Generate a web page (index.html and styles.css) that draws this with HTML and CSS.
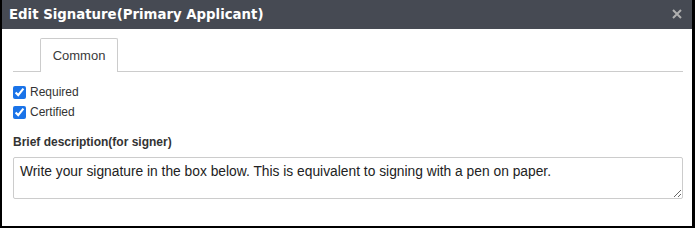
FILE: index.html
```html
<!DOCTYPE html>
<html lang="en">
<head>
    <meta charset="UTF-8">
    <title>Edit Signature</title>
    <link rel="stylesheet" href="styles.css">
</head>
<body>
    <div class="dialog">
        <div class="titlebar">
            <span class="title">Edit Signature(Primary Applicant)</span>
            <svg class="close" width="10" height="10" viewBox="0 0 10 10"><path d="M1 1L9 9M9 1L1 9" stroke="#b0b0b0" stroke-width="2"/></svg>
        </div>
        <div class="content">
            <ul class="tabs">
                <li class="tab active">Common</li>
            </ul>
            <div class="checks">
                <label><input type="checkbox" checked> Required</label>
                <label><input type="checkbox" checked> Certified</label>
            </div>
            <div class="field">
                <label class="field_label" for="brief">Brief description(for signer)</label>
                <textarea id="brief">Write your signature in the box below. This is equivalent to signing with a pen on paper.</textarea>
            </div>
        </div>
    </div>
</body>
</html>
```

FILE: styles.css
```css
html, body { margin: 0; padding: 0; background: #000; }
body { font-family: "Liberation Sans", Arial, sans-serif; }
.dialog { width: 690px; height: 226px; margin-left: 2px; background: #fff; }

.titlebar { height: 29px; background: #464a53; color: #fff; display: flex; align-items: center; justify-content: space-between; padding: 0 10px 0 7px; box-sizing: border-box; }
.title { font-family: "DejaVu Sans", Verdana, sans-serif; font-weight: bold; font-size: 13.3px; }
.close { display: block; margin-top: -2px; }

.content { padding: 9px 9px 0 11px; }
.tabs { list-style: none; margin: 0; padding: 0 0 0 27px; border-bottom: 1px solid #ccc; display: flex; height: 33px; }
.tab { width: 78px; box-sizing: border-box; border: 1px solid #ccc; border-bottom: none; border-radius: 2px 2px 0 0; background: #fff; height: 34px; font-size: 13px; color: #3a3a3a; display: flex; align-items: center; justify-content: center; }

.checks { padding-top: 12px; display: flex; flex-direction: column; gap: 4px; }
.checks label { font-size: 12px; color: #333; display: flex; align-items: center; height: 16px; }
.checks input { margin: 0 4px 0 0; width: 13px; height: 13px; accent-color: #1a73e8; }

.field { padding-top: 15px; }
.field_label { display: block; font-size: 12px; font-weight: bold; color: #333; margin-bottom: 8px; }
.field textarea { display: block; width: 670px; height: 42px; box-sizing: border-box; border: 1px solid #ccc; border-radius: 2px; padding: 6px 6px; font-family: "Liberation Sans", Arial, sans-serif; font-size: 13.8px; color: #222; resize: vertical; margin: 0; }
```
